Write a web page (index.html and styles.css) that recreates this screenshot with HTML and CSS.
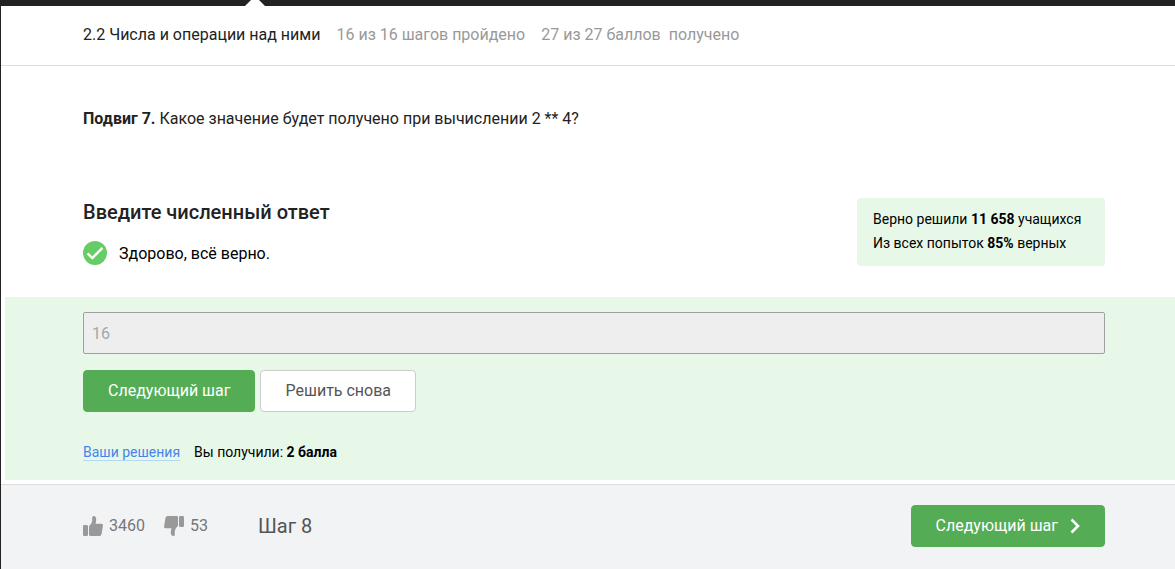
FILE: index.html
```html
<!DOCTYPE html>
<html lang="ru">
<head>
<meta charset="utf-8">
<meta name="viewport" content="width=device-width, initial-scale=1">
<title>2.2 Числа и операции над ними</title>
<link rel="stylesheet" href="styles.css">
</head>
<body>
<div class="topbar"><svg class="topbar-pointer" width="22" height="6" viewBox="0 0 22 6" aria-hidden="true"><path d="M1 6 7 0h8l6 6z" fill="#fff"/></svg></div>
<div class="page">
  <header class="lesson-header">
    <span class="lesson-title">2.2 Числа и операции над ними</span>
    <span>16 из 16 шагов пройдено</span>
    <span>27 из 27 баллов&nbsp; получено</span>
  </header>
  <main class="step">
    <p class="question"><strong>Подвиг 7.</strong> Какое значение будет получено при вычислении 2 ** 4?</p>
    <section class="quiz-head">
      <div>
        <h2 class="quiz-title"><label for="answer">Введите численный ответ</label></h2>
        <p class="feedback">
          <svg width="24" height="24" viewBox="0 0 24 24" aria-hidden="true"><circle cx="12" cy="12" r="12" fill="#66cc66"/><path d="M4.5 12.3 9.3 17 19.5 6.800" fill="none" stroke="#fff" stroke-width="2.400"/></svg>
          <span class="feedback-text">Здорово, всё верно.</span>
        </p>
      </div>
      <div class="stats">
        <div>Верно решили <strong>11 658</strong> учащихся</div>
        <div>Из всех попыток <strong>85%</strong> верных</div>
      </div>
    </section>
    <section class="attempt">
      <input class="answer" id="answer" type="text" value="16" disabled>
      <div class="actions">
        <button class="btn btn-primary" type="button">Следующий шаг</button>
        <button class="btn btn-plain" type="button">Решить снова</button>
      </div>
      <div class="result">
        <a class="solutions" href="#">Ваши решения</a>
        <span>Вы получили: <strong>2 балла</strong></span>
      </div>
    </section>
  </main>
  <footer class="step-footer">
    <button class="vote" type="button" aria-label="Нравится, 3460">
      <svg width="20" height="20" viewBox="0 0 20 20" fill="#999" aria-hidden="true"><rect y="9" width="5" height="11" rx="1.2"/><path d="M6 10.2C7.5 8.6 9 6.700 9.200 5V1.500Q9.200 0 10.500 0C12.500 0 13.200 1.500 13.200 3.500Q13.200 5.500 12.500 7.800H18.500Q20 7.800 20 9.300L18.600 17.800Q18.300 20 16.500 20H7.500Q6 20 6 18.600z"/></svg>
      <span class="vote-count">3460</span>
    </button>
    <button class="vote" type="button" aria-label="Не нравится, 53">
      <svg class="vote-down" width="20" height="20" viewBox="0 0 20 20" fill="#999" aria-hidden="true"><rect y="9" width="5" height="11" rx="1.2"/><path d="M6 10.2C7.5 8.6 9 6.700 9.200 5V1.500Q9.200 0 10.500 0C12.500 0 13.200 1.500 13.200 3.500Q13.200 5.500 12.500 7.800H18.500Q20 7.800 20 9.300L18.600 17.800Q18.300 20 16.500 20H7.500Q6 20 6 18.600z"/></svg>
      <span class="vote-count">53</span>
    </button>
    <span class="step-number">Шаг 8</span>
    <button class="btn btn-primary btn-next" type="button">Следующий шаг
      <svg width="10" height="16" viewBox="0 0 10 16" aria-hidden="true"><path d="M1.500 1.500 8 8 1.500 14.500" fill="none" stroke="#fff" stroke-width="2.600"/></svg>
    </button>
  </footer>
</div>
</body>
</html>
```
FILE: styles.css
```css
* {
  box-sizing: border-box;
}

body {
  margin: 0;
  min-height: 100vh;
  display: flex;
  flex-direction: column;
  background: #fff;
  color: #222;
  font: 16px/24px Roboto, "Liberation Sans", sans-serif;
}

p,
h2 {
  margin: 0;
}

strong {
  font-weight: 700;
}

button {
  font: inherit;
  cursor: pointer;
}

.topbar {
  height: 6px;
  padding-left: 244px;
  background: #222;
}

.topbar-pointer {
  display: block;
}

.page {
  flex: 1;
  display: flex;
  flex-direction: column;
  border-left: 1px solid #222;
}

.lesson-header {
  display: flex;
  gap: 16px;
  padding: 17px 70px 18px 82px;
  border-bottom: 1px solid #ddd;
  color: #999;
}

.lesson-title {
  color: #222;
}

.question {
  padding: 41px 70px 0 82px;
}

.quiz-head {
  display: flex;
  justify-content: space-between;
  align-items: flex-start;
  padding: 67px 70px 31px 82px;
}

.quiz-title {
  font-size: 20px;
  line-height: 28px;
  font-weight: 500;
}

.feedback {
  display: flex;
  gap: 12px;
  margin-top: 15px;
  color: #000;
}

.feedback-text {
  line-height: 26px;
  margin-bottom: -2px;
}

.stats {
  min-width: 248px;
  padding: 9px 16px 11px;
  border-radius: 4px;
  background: #e7f8e9;
  color: #000;
  font-size: 14px;
}

.attempt {
  margin: 0 0 4px 4px;
  padding: 15px 70px 16px 78px;
  background: #e7f8e9;
}

.answer {
  display: block;
  width: 100%;
  height: 42px;
  padding: 0 8px;
  border: 1px solid #a0a0a0;
  border-radius: 2px;
  background: #eee;
  color: #a6a6a6;
  font: inherit;
}

.actions {
  display: flex;
  gap: 5px;
  margin-top: 16px;
}

.btn {
  padding: 8px 24px;
  border: 1px solid;
  border-radius: 4px;
}

.btn-primary {
  border-color: #54ad54;
  background: #54ad54;
  color: #fff;
}

.btn-plain {
  border-color: #ccc;
  background: #fff;
  color: #555;
}

.result {
  display: flex;
  gap: 14px;
  margin-top: 28px;
  color: #000;
  font-size: 14px;
}

.solutions {
  align-self: center;
  border-bottom: 1px solid #b3d7f5;
  color: #4485ed;
  line-height: 16px;
  text-decoration: none;
}

.step-footer {
  flex: 1;
  display: flex;
  align-items: center;
  padding: 20px 70px 22px 82px;
  border-top: 1px solid #ddd;
  background: #f2f3f5;
}

.vote {
  display: flex;
  align-items: center;
  gap: 6px;
  margin-right: 19px;
  padding: 0;
  border: 0;
  background: none;
  color: #777;
}

.vote-count {
  line-height: 26px;
}

.vote-down {
  transform: rotate(180deg);
}

.step-number {
  margin-left: 31px;
  color: #555;
  font-size: 20px;
}

.btn-next {
  display: flex;
  align-items: center;
  gap: 12px;
  margin-left: auto;
}
```
